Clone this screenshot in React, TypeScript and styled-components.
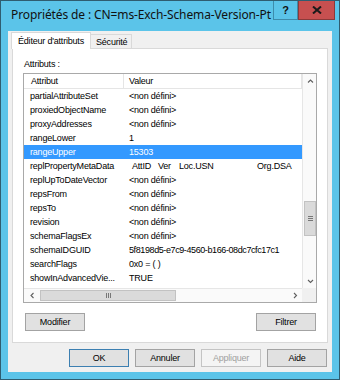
import React from "react";
import styled, { createGlobalStyle } from "styled-components";

const GlobalStyle = createGlobalStyle`
  html, body { margin: 0; padding: 0; background: #ffffff; }
  *, *::before, *::after { box-sizing: border-box; }
`;

const Window = styled.div`
  width: 340px;
  height: 380px;
  background: #5bc4e9;
  border: 1px solid #2f5d70;
  display: flex;
  flex-direction: column;
  font-family: "Liberation Sans", Arial, sans-serif;
  font-size: 9px;
  letter-spacing: -0.2px;
  color: #000;
`;

const TitleBar = styled.div`
  height: 30px;
  display: flex;
  align-items: flex-start;
`;

const Title = styled.div`
  flex: 1;
  min-width: 0;
  padding: 5px 0 0 10px;
  font-family: "Noto Sans", "Open Sans", sans-serif;
  font-size: 12px;
  letter-spacing: -0.12px;
  line-height: 18px;
  color: #111;
  white-space: nowrap;
  overflow: hidden;
`;

const CaptionButtons = styled.div`
  display: flex;
  margin-right: 4px;
`;

const CaptionButton = styled.div<{ $close?: boolean; $w: number }>`
  width: ${(p) => p.$w}px;
  height: 19px;
  display: flex;
  align-items: center;
  justify-content: center;
  background: ${(p) => (p.$close ? "#c75050" : "#5bc4e9")};
  border: 1px solid ${(p) => (p.$close ? "#8a3a3a" : "#3d8cab")};
  border-top: none;
  font-family: "Liberation Sans", Arial, sans-serif;
  font-weight: bold;
  font-size: 11px;
  letter-spacing: 0;
  color: #111;
`;

const Client = styled.div`
  flex: 1;
  margin: 0 7px 7px 7px;
  background: #f0f0f0;
  display: flex;
  flex-direction: column;
`;

const TabStrip = styled.div`
  height: 17px;
  display: flex;
  align-items: flex-end;
  padding-left: 3px;
  position: relative;
  z-index: 1;
`;

const Tab = styled.div<{ $active?: boolean; $w: number }>`
  width: ${(p) => p.$w}px;
  height: ${(p) => (p.$active ? 17 : 14)}px;
  margin-bottom: ${(p) => (p.$active ? -1 : 0)}px;
  margin-left: ${(p) => (p.$active ? 0 : -1)}px;
  background: ${(p) => (p.$active ? "#ffffff" : "#f0f0f0")};
  border: 1px solid #d9d9d9;
  border-bottom: none;
  display: flex;
  align-items: center;
  padding-left: ${(p) => (p.$active ? 6 : 5)}px;
  padding-bottom: ${(p) => (p.$active ? 1 : 0)}px;
  position: relative;
  z-index: ${(p) => (p.$active ? 2 : 1)};
`;

const Panel = styled.div`
  height: 295px;
  margin: 0 4px;
  background: #ffffff;
  border: 1px solid #d9d9d9;
  padding: 0 10px;
  display: flex;
  flex-direction: column;
`;

const Label = styled.div`
  margin-top: 9px;
  padding-left: 1px;
  line-height: 12px;
  height: 12px;
`;

const ListBox = styled.div`
  margin-top: 3px;
  height: 230px;
  border: 1px solid #a9a9a9;
  display: grid;
  grid-template-columns: 1fr 14px;
  grid-template-rows: 1fr 14px;
  background: #ffffff;
`;

const ListContent = styled.div`
  overflow: hidden;
  display: flex;
  flex-direction: column;
`;

const HeaderRow = styled.div`
  height: 15px;
  display: flex;
  border-bottom: 1px solid #e5e5e5;
  flex-shrink: 0;
`;

const HeaderCell = styled.div<{ $first?: boolean }>`
  width: ${(p) => (p.$first ? "100px" : "auto")};
  flex: ${(p) => (p.$first ? "none" : "1")};
  border-right: 1px solid #e5e5e5;
  padding-left: ${(p) => (p.$first ? 7 : 5)}px;
  display: flex;
  align-items: center;
`;

const Row = styled.div<{ $selected?: boolean }>`
  height: 14px;
  display: flex;
  align-items: center;
  flex-shrink: 0;
  white-space: nowrap;
  background: ${(p) => (p.$selected ? "#3399ff" : "transparent")};
  color: ${(p) => (p.$selected ? "#ffffff" : "#000000")};
`;

const Cell = styled.div<{ $first?: boolean }>`
  width: ${(p) => (p.$first ? "100px" : "auto")};
  flex: ${(p) => (p.$first ? "none" : "1")};
  padding-left: ${(p) => (p.$first ? 6 : 5)}px;
  overflow: hidden;
`;

const MetaCols = styled.span`
  display: inline-flex;
  padding-left: 3px;
`;

const MetaCol = styled.span<{ $w: number }>`
  display: inline-block;
  width: ${(p) => p.$w}px;
`;

const Guid = styled.span`
  letter-spacing: -0.4px;
`;

const VScroll = styled.div`
  background: #fafafa;
  border-left: 1px solid #e6e6e6;
  display: flex;
  flex-direction: column;
`;

const HScroll = styled.div`
  background: #fafafa;
  border-top: 1px solid #e6e6e6;
  display: flex;
`;

const Corner = styled.div`
  background: #f0f0f0;
`;

const Arrow = styled.div<{ $size: number }>`
  flex: none;
  width: ${(p) => p.$size}px;
  height: ${(p) => p.$size}px;
  display: flex;
  align-items: center;
  justify-content: center;
`;

const HArrow = styled.div<{ $w: number }>`
  flex: none;
  width: ${(p) => p.$w}px;
  height: 100%;
  display: flex;
  align-items: center;
  justify-content: center;
`;

const VThumb = styled.div`
  margin-top: 113px;
  height: 35px;
  margin-left: 1px;
  width: 12px;
  background: #dadada;
  border: 1px solid #c2c2c2;
  display: flex;
  align-items: center;
  justify-content: center;
`;

const HThumb = styled.div`
  width: 136px;
  margin: 1px 0;
  background: #dadada;
  border: 1px solid #c2c2c2;
  display: flex;
  align-items: center;
  justify-content: center;
`;

const Spacer = styled.div`
  flex: 1;
`;

const ButtonRow = styled.div<{ $end?: boolean }>`
  display: flex;
  justify-content: ${(p) => (p.$end ? "flex-end" : "space-between")};
  gap: 6px;
`;

const PanelButtons = styled(ButtonRow)`
  margin-top: 10px;
  padding: 0 1px 0 2px;
`;

const DialogButtons = styled(ButtonRow)`
  margin-top: 6px;
  padding-right: 5px;
`;

const Button = styled.div<{ $kind?: "default" | "disabled" }>`
  width: 60px;
  height: 18px;
  display: flex;
  align-items: center;
  justify-content: center;
  font-family: "Liberation Sans", Arial, sans-serif;
  font-size: 9px;
  background: ${(p) => (p.$kind === "disabled" ? "#f4f4f4" : "#e1e1e1")};
  border: 1px solid
    ${(p) =>
      p.$kind === "default" ? "#3c7fb1" : p.$kind === "disabled" ? "#c4c4c4" : "#a3a3a3"};
  color: ${(p) => (p.$kind === "disabled" ? "#a0a0a0" : "#000")};
`;

const Chevron = ({ dir }: { dir: "up" | "down" | "left" | "right" }) => {
  const paths: Record<string, string> = {
    up: "M1 4.5 L3.5 2 L6 4.5",
    down: "M1 2 L3.5 4.5 L6 2",
    left: "M4.5 1 L2 3.5 L4.5 6",
    right: "M2 1 L4.5 3.5 L2 6",
  };
  return (
    <svg width="7" height="7" viewBox="0 0 7 7">
      <path d={paths[dir]} fill="none" stroke="#606060" strokeWidth="1.1" />
    </svg>
  );
};

const Grip = ({ vertical }: { vertical?: boolean }) =>
  vertical ? (
    <svg width="5" height="5" viewBox="0 0 5 5">
      <path d="M0 0.5 H5 M0 2.5 H5 M0 4.5 H5" stroke="#777" strokeWidth="1" />
    </svg>
  ) : (
    <svg width="5" height="5" viewBox="0 0 5 5">
      <path d="M0.5 0 V5 M2.5 0 V5 M4.5 0 V5" stroke="#777" strokeWidth="1" />
    </svg>
  );

const rows: { name: string; value: React.ReactNode; selected?: boolean }[] = [
  { name: "partialAttributeSet", value: "<non défini>" },
  { name: "proxiedObjectName", value: "<non défini>" },
  { name: "proxyAddresses", value: "<non défini>" },
  { name: "rangeLower", value: "1" },
  { name: "rangeUpper", value: "15303", selected: true },
  {
    name: "replPropertyMetaData",
    value: (
      <MetaCols>
        <MetaCol $w={26}>AttID</MetaCol>
        <MetaCol $w={21}>Ver</MetaCol>
        <MetaCol $w={78}>Loc.USN</MetaCol>
        <MetaCol $w={40}>Org.DSA</MetaCol>
      </MetaCols>
    ),
  },
  { name: "replUpToDateVector", value: "<non défini>" },
  { name: "repsFrom", value: "<non défini>" },
  { name: "repsTo", value: "<non défini>" },
  { name: "revision", value: "<non défini>" },
  { name: "schemaFlagsEx", value: "<non défini>" },
  { name: "schemaIDGUID", value: <Guid>5f8198d5-e7c9-4560-b166-08dc7cfc17c1</Guid> },
  { name: "searchFlags", value: "0x0 = ( )" },
  { name: "showInAdvancedVie...", value: "TRUE" },
];

export default function App() {
  return (
    <>
      <GlobalStyle />
      <Window>
        <TitleBar>
          <Title>Propriétés de : CN=ms-Exch-Schema-Version-Pt</Title>
          <CaptionButtons>
            <CaptionButton $w={25}>?</CaptionButton>
            <CaptionButton $w={37} $close>
              <svg width="10" height="8" viewBox="0 0 10 8">
                <path d="M1 0.5 L9 7.5 M9 0.5 L1 7.5" stroke="#1a1a1a" strokeWidth="2" />
              </svg>
            </CaptionButton>
          </CaptionButtons>
        </TitleBar>
        <Client>
          <TabStrip>
            <Tab $active $w={80}>Éditeur d'attributs</Tab>
            <Tab $w={42}>Sécurité</Tab>
          </TabStrip>
          <Panel>
            <Label>Attributs :</Label>
            <ListBox>
              <ListContent>
                <HeaderRow>
                  <HeaderCell $first>Attribut</HeaderCell>
                  <HeaderCell>Valeur</HeaderCell>
                </HeaderRow>
                {rows.map((r) => (
                  <Row key={r.name} $selected={r.selected}>
                    <Cell $first>{r.name}</Cell>
                    <Cell>{r.value}</Cell>
                  </Row>
                ))}
              </ListContent>
              <VScroll>
                <Arrow $size={14}>
                  <Chevron dir="up" />
                </Arrow>
                <VThumb>
                  <Grip vertical />
                </VThumb>
                <Spacer />
                <Arrow $size={14}>
                  <Chevron dir="down" />
                </Arrow>
              </VScroll>
              <HScroll>
                <HArrow $w={16}>
                  <Chevron dir="left" />
                </HArrow>
                <HThumb>
                  <Grip />
                </HThumb>
                <Spacer />
                <HArrow $w={14}>
                  <Chevron dir="right" />
                </HArrow>
              </HScroll>
              <Corner />
            </ListBox>
            <PanelButtons>
              <Button>Modifier</Button>
              <Button>Filtrer</Button>
            </PanelButtons>
          </Panel>
          <DialogButtons $end>
            <Button $kind="default">OK</Button>
            <Button>Annuler</Button>
            <Button $kind="disabled">Appliquer</Button>
            <Button>Aide</Button>
          </DialogButtons>
        </Client>
      </Window>
    </>
  );
}
